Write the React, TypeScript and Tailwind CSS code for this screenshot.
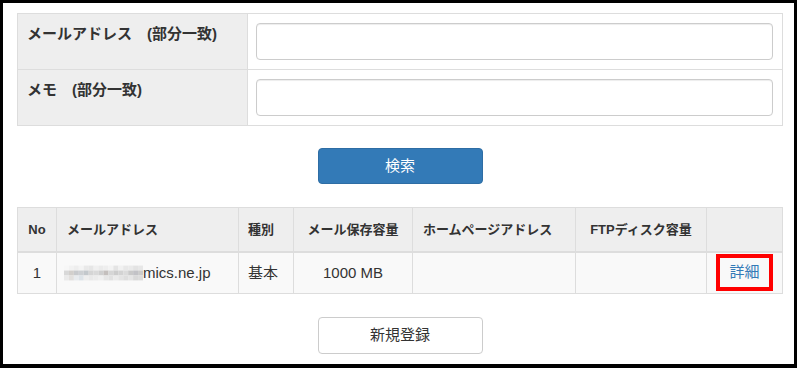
import React from "react";

const FONT = { fontFamily: '"Liberation Sans", "Noto Sans CJK JP", sans-serif' };

// pixelated blur over the masked part of the address
const blurRows = [
  ["#f7f7f7", "#f2f2f2", "#eeeeee", "#f4f4f4", "#e9e9e9", "#e6e6e6", "#f0f0f0", "#ebebeb", "#eeeeee", "#f3f3f3", "#e4e4e4", "#f1f1f1", "#e8e8e8", "#eaeaea", "#e3e3e3", "#e7e7e7"],
  ["#d8d8d8", "#d2cfcc", "#c8cacd", "#cdd0d3", "#c3c8cc", "#d5d5d5", "#d9d9d9", "#cfcfcf", "#c4bfbd", "#d6d6d6", "#cccccc", "#d3d3d3", "#dbdbdb", "#c9c9c9", "#c2c2c6", "#cbcbcb"],
  ["#eaeaea", "#e2e0de", "#e8ebee", "#dde3e8", "#eeeeee", "#e9e9e9", "#ececec", "#f0f0f0", "#e6e6e6", "#e1e1e1", "#ebebeb", "#e4e4e4", "#dedede", "#e5e5e5", "#d9d9d9", "#dcdcdc"],
];

function Blur() {
  return (
    <svg width="79" height="16" viewBox="0 0 80 15" className="inline-block align-[-2px]">
      {blurRows.map((row, r) =>
        row.map((c, i) => <rect key={`${r}-${i}`} x={i * 5} y={r * 5} width="5" height="5" fill={c} />)
      )}
    </svg>
  );
}

function FormRow({ label, last }: { label: string; last?: boolean }) {
  return (
    <div className={`grid grid-cols-[230px_1fr] ${last ? "" : "border-b border-[#dddddd]"}`}>
      <div className="h-[55px] bg-[#eeeeee] border-r border-[#dddddd] pl-[9px] pt-[10px] text-[15px] leading-[20px] font-bold text-[#333333]">
        {label}
      </div>
      <div className="pl-2 pr-[9px] pt-[9px]">
        <input
          type="text"
          className="w-full h-[37px] rounded-[4px] border border-[#cccccc] bg-white shadow-[inset_0_1px_1px_rgba(0,0,0,0.075)] outline-none"
        />
      </div>
    </div>
  );
}

const headers = ["No", "メールアドレス", "種別", "メール保存容量", "ホームページアドレス", "FTPディスク容量", ""];
const headerAlign = ["text-center", "text-left pl-[10px]", "text-left pl-[9px]", "text-center", "text-left pl-[10px]", "text-center", ""];

export default function App() {
  return (
    <div
      style={FONT}
      className="w-[797px] h-[368px] box-border bg-white border-t-[3px] border-l-[3px] border-r-[3px] border-b-4 border-black pl-[14px] pr-[11px] pt-[10px] text-[#333333]"
    >
      {/* search form */}
      <div className="w-[766px] border border-[#dddddd]">
        <FormRow label="メールアドレス　(部分一致)" />
        <FormRow label="メモ　(部分一致)" last />
      </div>

      <div className="flex justify-center w-[766px] mt-[22px]">
        <button className="w-[165px] h-[36px] rounded-[4px] bg-[#337ab7] border border-[#2e6da4] text-white text-[15px]">
          検索
        </button>
      </div>

      {/* results */}
      <div className="w-[766px] mt-[23px] border border-[#dddddd]">
        <div className="grid grid-cols-[38px_182px_55px_119px_163px_131px_76px] bg-[#eeeeee] border-b-2 border-[#dddddd] text-[13px] font-bold">
          {headers.map((h, i) => (
            <div
              key={i}
              className={`h-[43px] flex items-center ${i > 0 ? "border-l border-[#dddddd]" : ""} ${
                headerAlign[i].startsWith("text-center") ? "justify-center" : "justify-start"
              } ${headerAlign[i]}`}
            >
              {h}
            </div>
          ))}
        </div>
        <div className="grid grid-cols-[38px_182px_55px_119px_163px_131px_76px] bg-[#f9f9f9] text-[15px]">
          <div className="h-[40px] flex items-center justify-center">1</div>
          <div className="h-[40px] flex items-center pl-[7px] border-l border-[#dddddd]">
            <Blur />
            <span>mics.ne.jp</span>
          </div>
          <div className="h-[40px] flex items-center pl-[9px] border-l border-[#dddddd]">基本</div>
          <div className="h-[40px] flex items-center justify-center border-l border-[#dddddd]">1000 MB</div>
          <div className="h-[40px] border-l border-[#dddddd]" />
          <div className="h-[40px] border-l border-[#dddddd]" />
          <div className="h-[40px] border-l border-[#dddddd] pl-[9px] pt-[1px]">
            <div className="w-[57px] h-[37px] border-4 border-[#ff0000] flex items-center justify-center text-[#337ab7]">
              詳細
            </div>
          </div>
        </div>
      </div>

      <div className="flex justify-center w-[766px] mt-[23px]">
        <button className="w-[165px] h-[37px] rounded-[4px] bg-white border border-[#cccccc] text-[#333333] text-[15px]">
          新規登録
        </button>
      </div>
    </div>
  );
}
